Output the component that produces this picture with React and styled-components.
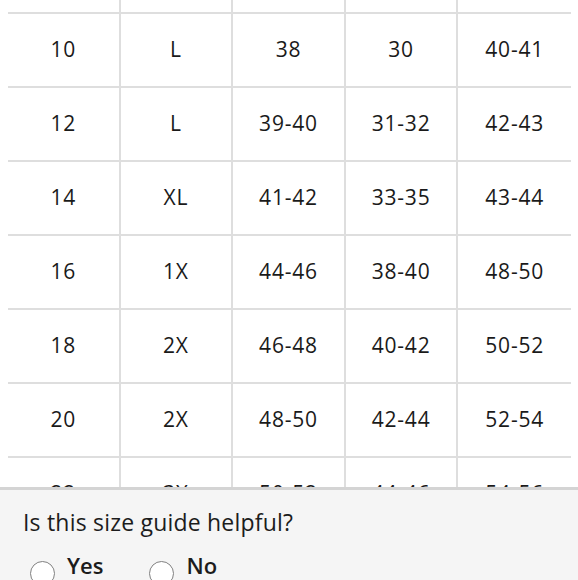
import React from 'react'
import styled, { createGlobalStyle } from 'styled-components';

const GlobalStyle = createGlobalStyle`
    html, body {
        margin: 0;
        padding: 0;
        background: #ffffff;
        overflow: hidden;
    }
    body {
        font-family: "Open Sans", Lato, sans-serif;
        color: #1a1a1a;
    }
`;

const Page = styled.div`
    height: 580px;
    overflow: hidden;
    padding: 0 7px 0 8px;
`;

const Grid = styled.div`
    display: grid;
    grid-template-columns: repeat(5, 1fr);
`;

const Cell = styled.div`
    height: ${props => props.$short ? '14px' : '74px'};
    display: flex;
    align-items: center;
    justify-content: center;
    font-size: 21px;
    letter-spacing: 0.8px;
    line-height: 1;
    padding-bottom: ${props => props.$short ? '0' : '2px'};
    box-sizing: border-box;
    border-bottom: 2px solid #dedede;
    border-right: ${props => props.$last ? 'none' : '2px solid #dedede'};
`;

const Feedback = styled.div`
    position: fixed;
    left: 0;
    right: 0;
    bottom: 0;
    height: 93px;
    background: #f5f5f5;
    border-top: 3px solid #d4d4d4;
    padding: 18px 23px 0;
    box-sizing: border-box;
`;

const Question = styled.p`
    margin: 0;
    font-size: 23px;
    letter-spacing: 0.2px;
    line-height: 28px;
    color: #1c1c1c;
`;

const Options = styled.div`
    display: flex;
    gap: 46px;
    margin-top: 15px;
    padding-left: 7px;
`;

const Option = styled.label`
    display: flex;
    align-items: flex-start;
    gap: 12px;
    font-size: 22px;
    line-height: 28px;
    font-weight: 600;
    color: #1c1c1c;
`;

const Radio = styled.span`
    width: 23px;
    height: 23px;
    border-radius: 50%;
    border: 1.5px solid #808080;
    background: #fff;
    margin-top: 10px;
`;

const rows = [
    ['', '', '', '', ''],
    ['10', 'L', '38', '30', '40-41'],
    ['12', 'L', '39-40', '31-32', '42-43'],
    ['14', 'XL', '41-42', '33-35', '43-44'],
    ['16', '1X', '44-46', '38-40', '48-50'],
    ['18', '2X', '46-48', '40-42', '50-52'],
    ['20', '2X', '48-50', '42-44', '52-54'],
    ['22', '3X', '50-52', '44-46', '54-56'],
];

function App() {
    return (
        <>
            <GlobalStyle />
            <Page>
                <Grid>
                    {rows.map((row, i) =>
                        row.map((value, j) => (
                            <Cell key={`${i}-${j}`} $short={i === 0} $last={j === 4}>{value}</Cell>
                        ))
                    )}
                </Grid>
            </Page>
            <Feedback>
                <Question>Is this size guide helpful?</Question>
                <Options>
                    <Option><Radio />Yes</Option>
                    <Option><Radio />No</Option>
                </Options>
            </Feedback>
        </>
    )
}

export default App
